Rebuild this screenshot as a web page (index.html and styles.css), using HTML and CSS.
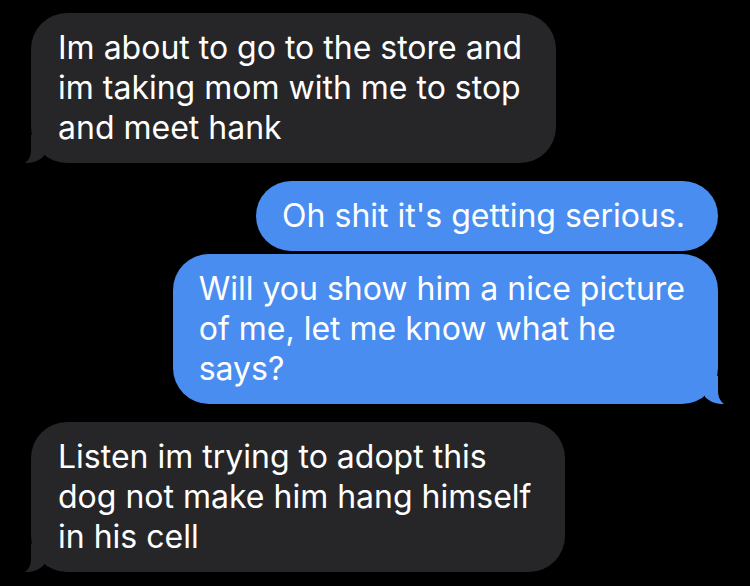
FILE: index.html
```html
<!doctype html>
<html>
<head>
    <meta charset="utf-8">
    <title>Messages</title>
    <link rel="stylesheet" href="styles.css">
</head>
<body>
	<div class='thread'>
		<div class='msg them tail'>
			Im about to go to the store and<br>im taking mom with me to stop<br>and meet hank
			<svg class='tailShape' width='32' height='28' viewBox='0 0 32 28'><path d='M7 0 L20 0 L20 21 C15 26 8 28.5 1 28 C5 25 7 21 7 14 Z'/></svg>
		</div>
		<div class='msg me'>Oh shit it's getting serious.</div>
		<div class='msg me tail'>
			Will you show him a nice picture<br>of me, let me know what he<br>says?
			<svg class='tailShape' width='32' height='28' viewBox='0 0 32 28'><path d='M7 0 L20 0 L20 21 C15 26 8 28.5 1 28 C5 25 7 21 7 14 Z'/></svg>
		</div>
		<div class='msg them tail'>
			Listen im trying to adopt this<br>dog not make him hang himself<br>in his cell
			<svg class='tailShape' width='32' height='28' viewBox='0 0 32 28'><path d='M7 0 L20 0 L20 21 C15 26 8 28.5 1 28 C5 25 7 21 7 14 Z'/></svg>
		</div>
	</div>
</body>
</html>
```

FILE: styles.css
```css
*{margin: 0;padding: 0;}
html,body{background: #000;height: 100%;}
body{font-family: Inter, "Noto Sans", sans-serif;color: #fff;}
.thread{
	display: flex;flex-direction: column;
	padding: 13px 32px 0 31px;
}
.msg{
	position: relative;
	width: fit-content;
	font-size: 32px;line-height: 40px;
	padding: 15px 34px 15px 27px;
	border-radius: 36px;
	white-space: nowrap;
}
.msg.them{background: #262628;align-self: flex-start;}
.msg.me{background: #4a8df1;align-self: flex-end;padding: 15px 33px 15px 26px;}
.msg.them + .msg.me,.msg.me + .msg.them{margin-top: 18px;}
.msg.me + .msg.me{margin-top: 3px;}
.tailShape{position: absolute;bottom: 0;left: -7px;}
.them .tailShape{fill: #262628;}
.me .tailShape{fill: #4a8df1;left: auto;right: -7px;transform: scaleX(-1);}
```
